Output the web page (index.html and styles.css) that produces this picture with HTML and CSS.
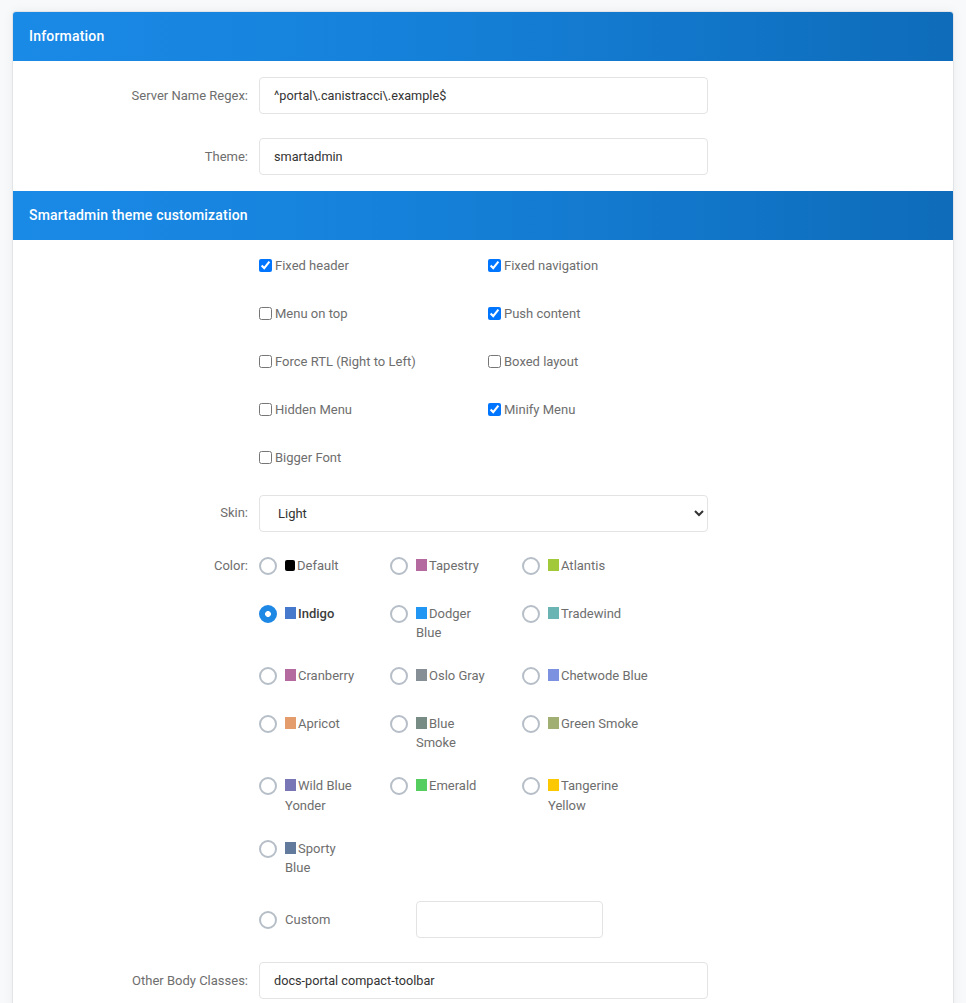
FILE: index.html
```
<!DOCTYPE html>
<html>
<head>
<meta charset="utf-8">
<title>Portal settings</title>
<link rel="stylesheet" href="styles.css">
</head>
<body>
<div class="panel">
	<div class="panel-hdr"><h2>Information</h2></div>
	<div class="panel-body">
		<div class="form-row">
			<label class="form-label">Server Name Regex:</label>
			<input class="form-control" type="text" value="^portal\.canistracci\.example$">
		</div>
		<div class="form-row">
			<label class="form-label">Theme:</label>
			<input class="form-control" type="text" value="smartadmin">
		</div>
	</div>

	<div class="panel-hdr"><h2>Smartadmin theme customization</h2></div>
	<div class="panel-body">
		<div class="form-row">
			<span class="form-label"></span>
			<div class="check-grid">
				<label class="check"><input type="checkbox" checked>Fixed header</label>
				<label class="check"><input type="checkbox" checked>Fixed navigation</label>
				<label class="check"><input type="checkbox">Menu on top</label>
				<label class="check"><input type="checkbox" checked>Push content</label>
				<label class="check"><input type="checkbox">Force RTL (Right to Left)</label>
				<label class="check"><input type="checkbox">Boxed layout</label>
				<label class="check"><input type="checkbox">Hidden Menu</label>
				<label class="check"><input type="checkbox" checked>Minify Menu</label>
				<label class="check"><input type="checkbox">Bigger Font</label>
			</div>
		</div>

		<div class="form-row">
			<label class="form-label">Skin:</label>
			<select class="form-control">
				<option>Light</option>
				<option>Dark</option>
			</select>
		</div>

		<div class="form-row top">
			<label class="form-label">Color:</label>
			<div class="colors">
				<div class="color-grid">
					<label class="color"><input type="radio" name="color"><span><i class="sw sw-default"></i>Default</span></label>
					<label class="color"><input type="radio" name="color"><span><i class="sw" style="background:#b56a9f"></i>Tapestry</span></label>
					<label class="color"><input type="radio" name="color"><span><i class="sw" style="background:#a1c93a"></i>Atlantis</span></label>
					<label class="color on"><input type="radio" name="color" checked><span><i class="sw" style="background:#4679cc"></i>Indigo</span></label>
					<label class="color"><input type="radio" name="color"><span><i class="sw" style="background:#2196f3"></i>Dodger Blue</span></label>
					<label class="color"><input type="radio" name="color"><span><i class="sw" style="background:#6ab5b4"></i>Tradewind</span></label>
					<label class="color"><input type="radio" name="color"><span><i class="sw" style="background:#b56a9f"></i>Cranberry</span></label>
					<label class="color"><input type="radio" name="color"><span><i class="sw" style="background:#868e96"></i>Oslo Gray</span></label>
					<label class="color"><input type="radio" name="color"><span><i class="sw" style="background:#7c91df"></i>Chetwode Blue</span></label>
					<label class="color"><input type="radio" name="color"><span><i class="sw" style="background:#e59c6c"></i>Apricot</span></label>
					<label class="color"><input type="radio" name="color"><span><i class="sw" style="background:#778c85"></i>Blue Smoke</span></label>
					<label class="color"><input type="radio" name="color"><span><i class="sw" style="background:#a2af73"></i>Green Smoke</span></label>
					<label class="color"><input type="radio" name="color"><span><i class="sw" style="background:#7976b6"></i>Wild Blue Yonder</span></label>
					<label class="color"><input type="radio" name="color"><span><i class="sw" style="background:#55ce5f"></i>Emerald</span></label>
					<label class="color"><input type="radio" name="color"><span><i class="sw" style="background:#fcc800"></i>Tangerine Yellow</span></label>
					<label class="color"><input type="radio" name="color"><span><i class="sw" style="background:#627a9b"></i>Sporty Blue</span></label>
				</div>
				<div class="custom-row">
					<label class="color custom"><input type="radio" name="color"><span>Custom</span></label>
					<input class="form-control custom-input" type="text">
				</div>
			</div>
		</div>

		<div class="form-row">
			<label class="form-label">Other Body Classes:</label>
			<input class="form-control" type="text" value="docs-portal compact-toolbar">
		</div>
	</div>
</div>
</body>
</html>
```
FILE: styles.css
```
*{margin:0;padding:0;box-sizing:border-box;}
body{background:#f8f9fb;font-family:Roboto,"Noto Sans",Arial,sans-serif;font-size:13px;color:#6e6e6e;padding:11px 12px 0 12px;}

.panel{background:#fff;border:1px solid #e2e4e8;border-bottom:0;border-radius:4px 4px 0 0;box-shadow:0 0 12px rgba(0,0,0,.05);overflow:hidden;}
.panel-hdr{height:49px;display:flex;align-items:center;padding:0 0 1px 16px;background:linear-gradient(90deg,#1a8ae7 0%,#1580d8 45%,#0e6cba 100%);}
.panel-hdr h2{font-size:14px;font-weight:500;color:#fff;letter-spacing:.2px;}

.panel-body{padding:16px 0 16px 0;display:flex;flex-direction:column;gap:24px;}
.panel-body:last-child{padding-bottom:40px;}

.form-row{display:grid;grid-template-columns:235px 449px;column-gap:11px;align-items:center;}
.form-row.top{align-items:start;}
.form-label{text-align:right;color:#6e6e6e;line-height:19.5px;}

.form-control{height:37px;width:100%;border:1px solid #e3e3e3;border-radius:4px;padding:0 14px;font-family:inherit;font-size:12.7px;color:#333;background:#fff;outline:none;}
select.form-control{padding:0 14px;font-size:13px;color:#333;}

.check-grid{display:grid;grid-template-columns:229px 229px;row-gap:28.5px;margin-bottom:3px;}
.check{display:flex;align-items:center;line-height:19.5px;color:#6e6e6e;white-space:nowrap;}
.check input{margin:0 3px 0 0;width:13px;height:13px;}

.color-grid{display:grid;grid-template-columns:131px 132px 131px;padding-top:.5px;}
.color{display:flex;align-items:flex-start;min-height:47.5px;padding-bottom:23.5px;padding-right:31px;line-height:19.5px;color:#6e6e6e;}
.color:nth-child(3n){padding-right:0;}
.color input{appearance:none;-webkit-appearance:none;flex:none;width:18px;height:18px;margin:1px 8px 0 0;border:2px solid #b6bec7;border-radius:50%;background:#fff;}
.color input:checked{border-color:#1e88e5;background:radial-gradient(circle,#fff 0 2.6px,#1e88e5 3.2px);}
.color.on span{font-weight:500;color:#3d3d3d;}
.sw{display:inline-block;width:11px;height:12px;margin-right:2px;vertical-align:-1px;}
.sw-default{background:#000;border-radius:2px;width:10px;height:11px;}

.custom-row{display:flex;align-items:center;}
.color.custom{width:157px;min-height:0;padding:0;align-items:center;}
.color.custom input{margin-top:0;}
.custom-input{width:187px;}
```
